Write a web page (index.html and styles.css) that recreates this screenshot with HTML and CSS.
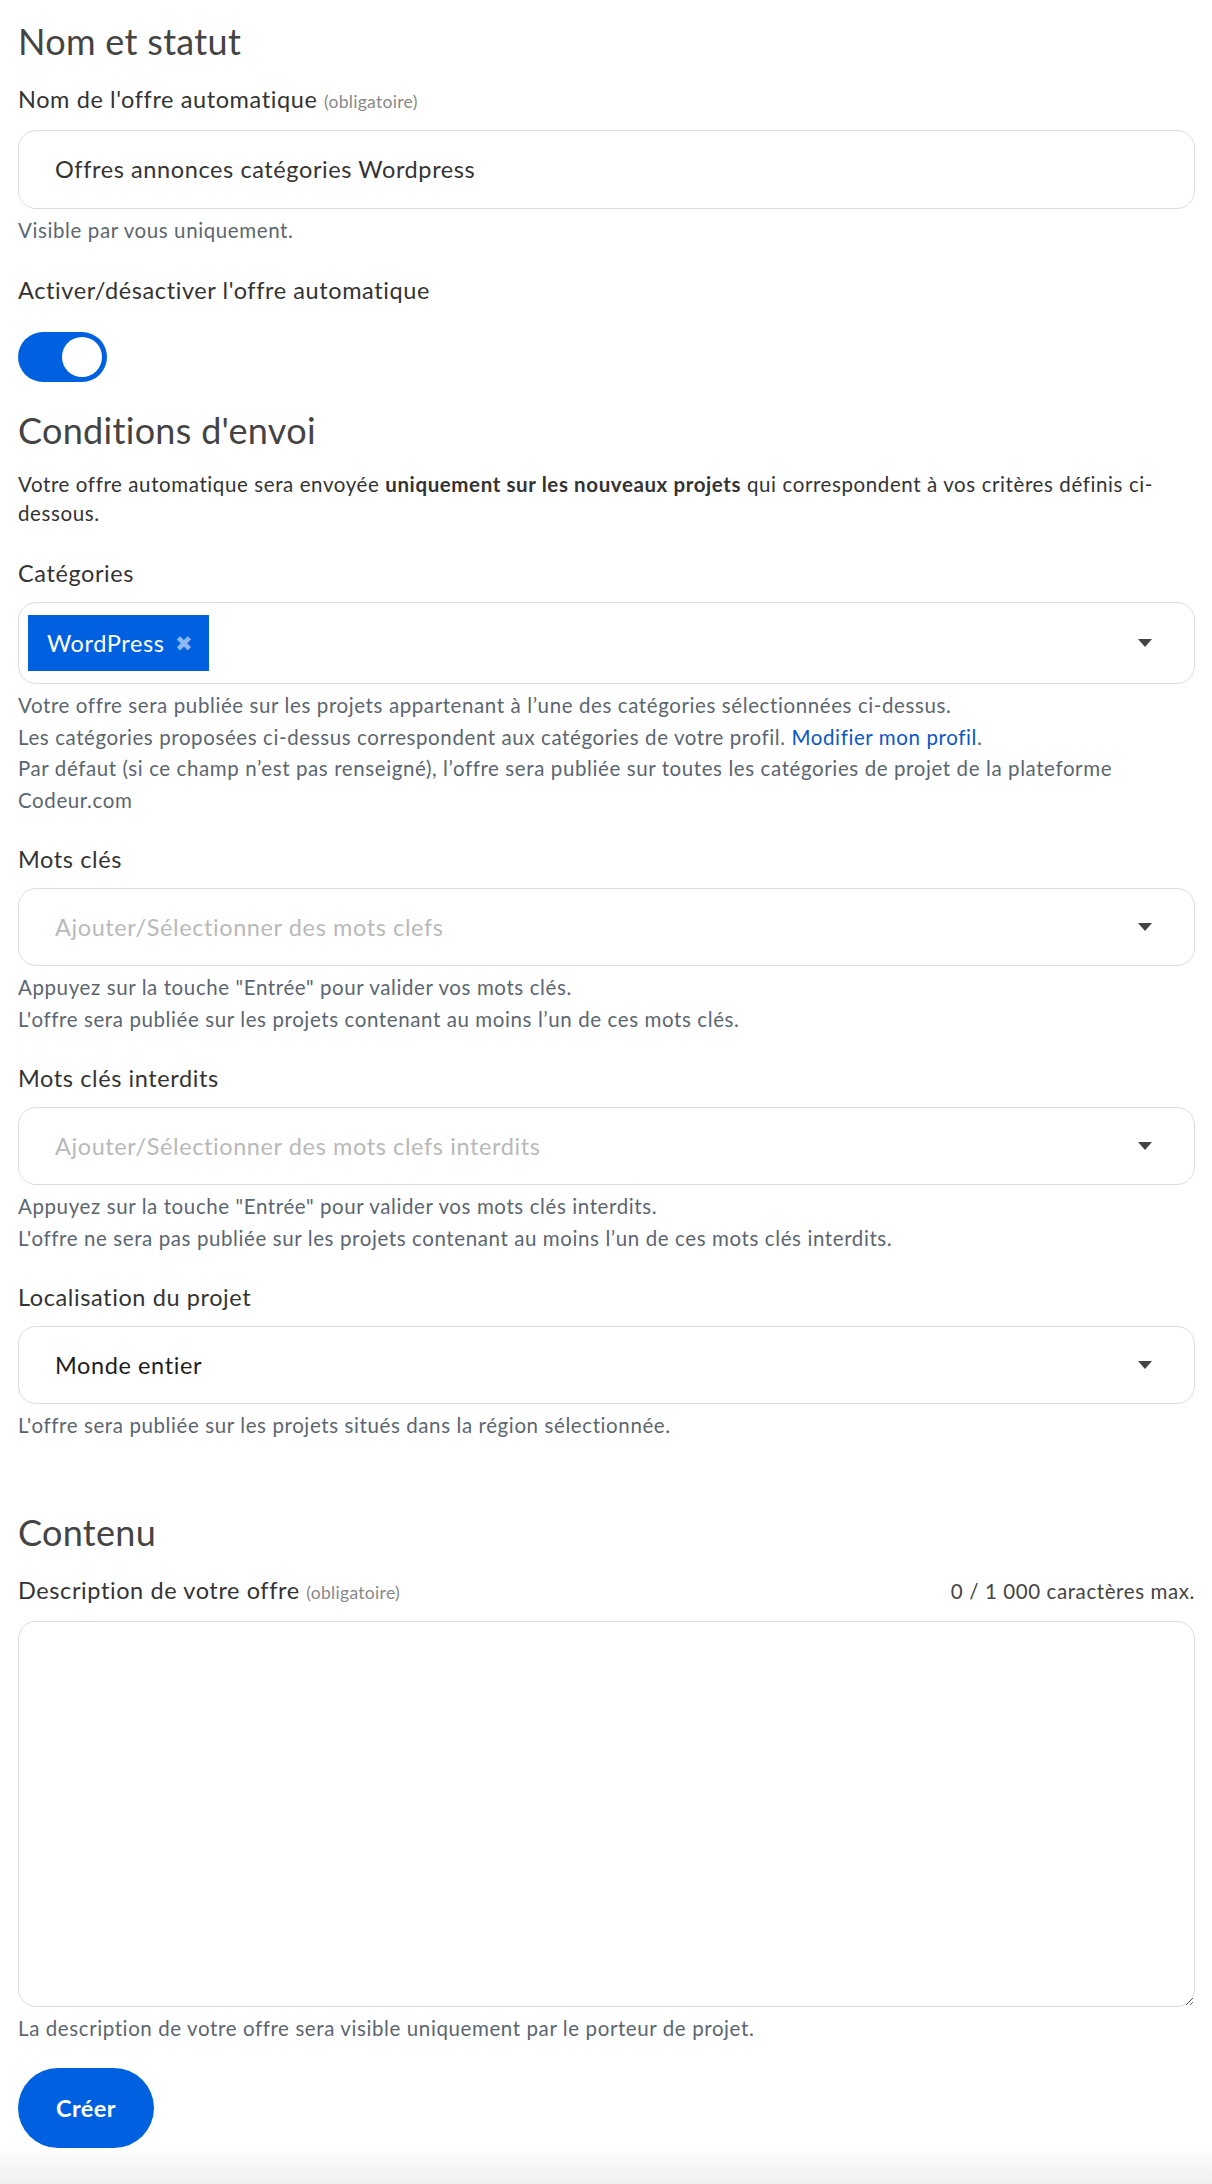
FILE: index.html
```html
<!DOCTYPE html>
<html lang="fr">
<head>
<meta charset="utf-8">
<title>Offre automatique</title>
<link rel="stylesheet" href="styles.css">
</head>
<body>
<form class="page">
  <h2 class="section-title first">Nom et statut</h2>

  <div class="field">
    <label class="label">Nom de l'offre automatique <span class="req">(obligatoire)</span></label>
    <div class="box input-box"><span class="value">Offres annonces catégories Wordpress</span></div>
    <div class="help">Visible par vous uniquement.</div>
  </div>

  <div class="field">
    <label class="label">Activer/désactiver l'offre automatique</label>
    <div class="toggle"><span class="knob"></span></div>
  </div>

  <h2 class="section-title">Conditions d'envoi</h2>
  <p class="intro">Votre offre automatique sera envoyée <strong>uniquement sur les nouveaux projets</strong> qui correspondent à vos critères définis ci-dessous.</p>

  <div class="field">
    <label class="label">Catégories</label>
    <div class="box select-box tags-box">
      <span class="tag">WordPress <span class="tag-x">✖</span></span>
      <span class="arrow"></span>
    </div>
    <div class="help">Votre offre sera publiée sur les projets appartenant à l’une des catégories sélectionnées ci-dessus.</div>
    <div class="help">Les catégories proposées ci-dessus correspondent aux catégories de votre profil. <a class="link" href="#">Modifier mon profil</a>.</div>
    <div class="help">Par défaut (si ce champ n’est pas renseigné), l’offre sera publiée sur toutes les catégories de projet de la plateforme Codeur.com</div>
  </div>

  <div class="field">
    <label class="label">Mots clés</label>
    <div class="box select-box"><span class="placeholder">Ajouter/Sélectionner des mots clefs</span><span class="arrow"></span></div>
    <div class="help">Appuyez sur la touche "Entrée" pour valider vos mots clés.</div>
    <div class="help">L'offre sera publiée sur les projets contenant au moins l’un de ces mots clés.</div>
  </div>

  <div class="field">
    <label class="label">Mots clés interdits</label>
    <div class="box select-box"><span class="placeholder">Ajouter/Sélectionner des mots clefs interdits</span><span class="arrow"></span></div>
    <div class="help">Appuyez sur la touche "Entrée" pour valider vos mots clés interdits.</div>
    <div class="help">L'offre ne sera pas publiée sur les projets contenant au moins l’un de ces mots clés interdits.</div>
  </div>

  <div class="field">
    <label class="label">Localisation du projet</label>
    <div class="box select-box"><span class="selected">Monde entier</span><span class="arrow"></span></div>
    <div class="help">L'offre sera publiée sur les projets situés dans la région sélectionnée.</div>
  </div>

  <h2 class="section-title content-title">Contenu</h2>

  <div class="field">
    <div class="label-row">
      <label class="label">Description de votre offre <span class="req">(obligatoire)</span></label>
      <span class="counter">0 / 1 000 caractères max.</span>
    </div>
    <textarea class="textarea"></textarea>
    <div class="help">La description de votre offre sera visible uniquement par le porteur de projet.</div>
  </div>

  <button type="button" class="btn">Créer</button>
</form>
<div class="footer-fade"></div>
</body>
</html>
```

FILE: styles.css
```css
* { box-sizing: border-box; }

html, body {
  margin: 0;
  padding: 0;
  background: #fff;
}

body {
  font-family: "Lato", "Noto Sans", sans-serif;
  color: #333;
  font-size: 20.5px;
  letter-spacing: 0.6px;
  min-height: 100vh;
  display: flex;
  flex-direction: column;
}

.page {
  padding: 20px 17px 0 18px;
  display: flex;
  flex-direction: column;
}

.section-title {
  margin: 27px 0 0;
  font-size: 36px;
  line-height: 43px;
  font-weight: 400;
  letter-spacing: 0.3px;
  color: #444;
}
.section-title.first { margin-top: 0; }

.field {
  display: flex;
  flex-direction: column;
  margin-top: 20px;
}
.section-title + .field { margin-top: 20px; }
.intro + .field { margin-top: 30px; }
.help + .field, .field + .field { margin-top: 27px; }
.field + .section-title { margin-top: 27px; }
.section-title.content-title { margin-top: 69px; }

.label {
  font-size: 23.5px;
  line-height: 33.5px;
  color: #333;
}
.req {
  font-size: 17.5px;
  letter-spacing: 0.3px;
  color: #888;
}

.label-row {
  display: flex;
  justify-content: space-between;
  align-items: baseline;
}
.counter {
  font-size: 20.5px;
  color: #444;
}

.box {
  margin-top: 11px;
  border: 1px solid #dcdcdc;
  border-radius: 18px;
  height: 79px;
  display: flex;
  align-items: center;
  padding: 0 36px;
  font-size: 23.5px;
  position: relative;
  background: #fff;
}
.select-box { height: 78px; }
.tags-box {
  height: 82px;
  padding: 0 9px;
}

.value { color: #333; }
.placeholder { color: #b9b9b9; }
.selected { color: #1e1e1e; }

.arrow {
  position: absolute;
  right: 42px;
  top: 50%;
  margin-top: -4px;
  width: 0;
  height: 0;
  border-left: 7px solid transparent;
  border-right: 7px solid transparent;
  border-top: 8px solid #444;
}

.tag {
  display: inline-flex;
  align-items: center;
  height: 56px;
  padding: 0 16px 0 19px;
  background: #0061e0;
  color: #fff;
  font-size: 23.5px;
}
.tag-x {
  margin-left: 10px;
  font-size: 21px;
  color: #8db8f2;
}

.help {
  font-size: 20.5px;
  line-height: 31.5px;
  color: #5b6670;
}
.box + .help { margin-top: 6.5px; }
.textarea + .help { margin-top: 6px; }

.link {
  color: #0b57c5;
  text-decoration: none;
}

.intro {
  margin: 18px 0 0;
  font-size: 20.5px;
  line-height: 28.5px;
  color: #333;
}
.intro strong { font-weight: 700; color: #333; }

.toggle {
  margin-top: 25px;
  width: 89px;
  height: 50px;
  border-radius: 25px;
  background: #0061e0;
  display: flex;
  align-items: center;
  justify-content: flex-end;
  padding-right: 5px;
}
.knob {
  width: 40px;
  height: 40px;
  border-radius: 50%;
  background: #fff;
}

.textarea {
  margin-top: 11.5px;
  height: 386px;
  width: 100%;
  border: 1px solid #dcdcdc;
  border-radius: 18px;
  resize: vertical;
  font-family: inherit;
  font-size: 20.5px;
  padding: 16px 36px;
  outline: none;
}

.btn {
  align-self: flex-start;
  margin-top: 24px;
  width: 136px;
  height: 80px;
  border: none;
  border-radius: 40px;
  background: #0061e0;
  color: #fff;
  font-family: inherit;
  font-size: 23.5px;
  letter-spacing: 0.4px;
  font-weight: 700;
  cursor: pointer;
}

.footer-fade {
  flex: 1;
  min-height: 37px;
  background: linear-gradient(to bottom, #ffffff 0%, #f7f7f7 40%, #f0f0f0 100%);
}
```
